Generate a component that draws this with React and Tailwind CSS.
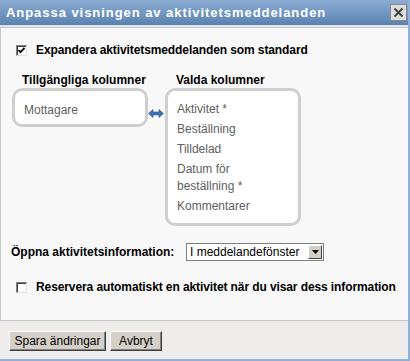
function Checkbox({ checked }) {
  return (
    <span className="flex h-[11px] w-[11px] shrink-0 items-center justify-center border border-t-[#808080] border-l-[#808080] border-b-[#e0e0e0] border-r-[#e0e0e0] bg-white shadow-[inset_1px_1px_0_#404040]">
      {checked && (
        <svg width="9" height="9" viewBox="0 0 9 9">
          <path d="M1.5 4 L3.5 6.2 L7.5 1.8" fill="none" stroke="#000" strokeWidth="1.8" />
        </svg>
      )}
    </span>
  );
}

function ListBox({ items, className }) {
  return (
    <div className={`rounded-[10px] border-[3px] border-[#cfcfcf] bg-white px-[9px] text-[12px] leading-[17px] text-[#606060] ${className}`}>
      {items.map((item) => (
        <div key={item} className="py-[1px] pb-[2px]">
          {item}
        </div>
      ))}
    </div>
  );
}

function SwapArrow() {
  return (
    <svg width="16" height="9" viewBox="0 0 16 9" className="mt-[36px] shrink-0">
      <path d="M0.5 4.5 L5 0.5 L5 3 L11 3 L11 0.5 L15.5 4.5 L11 8.5 L11 6 L5 6 L5 8.5 Z" fill="#3f72b5" stroke="#2a568f" strokeWidth="0.6" />
    </svg>
  );
}

function WinButton({ children, className }) {
  return (
    <button
      type="button"
      className={`h-[20px] whitespace-nowrap border border-t-white border-l-white border-b-[#404040] border-r-[#404040] bg-[#d4d0c8] px-0 text-[12px] leading-[16px] text-black shadow-[inset_-1px_-1px_0_#808080] ${className}`}
    >
      {children}
    </button>
  );
}

export default function App() {
  return (
    <div className="flex h-[361px] w-[410px] flex-col border-r-2 border-b-2 border-[#8fb1d8] bg-[#eeedeb] font-['Liberation_Sans',Arial,sans-serif]">
      <div className="flex h-[25px] shrink-0 items-center justify-between bg-gradient-to-b from-[#8cadd3] to-[#5a82b1] pl-[6px] pr-[1px]">
        <span className="text-[13px] font-bold tracking-[0.95px] text-white">Anpassa visningen av aktivitetsmeddelanden</span>
        <span className="flex h-[17px] w-[17px] items-center justify-center border border-[#8a8a8a] bg-[#dcdcdc]">
          <svg width="11" height="11" viewBox="0 0 11 11">
            <path d="M1.5 1.5 L9.5 9.5 M9.5 1.5 L1.5 9.5" stroke="#444" strokeWidth="2" />
          </svg>
        </span>
      </div>
      <div className="h-[2px] shrink-0 bg-[#e4e4e4]" />
      <div className="flex flex-1 flex-col border-t border-l border-b border-[#c4c8cc] bg-[#f8f8f8] pl-[15px]">
        <label className="mt-[13px] flex items-center gap-[9px] text-[12px] font-bold tracking-[-0.1px] text-black">
          <Checkbox checked />
          Expandera aktivitetsmeddelanden som standard
        </label>
        <div className="mt-[14px] flex items-start">
          <div className="flex flex-col">
            <span className="pl-[6px] text-[12px] leading-[14px] font-bold text-black">Tillgängliga kolumner</span>
            <ListBox items={['Mottagare']} className="mt-[1px] ml-[-4px] h-[39px] w-[136px] pt-[10px]" />
          </div>
          <SwapArrow />
          <div className="ml-[1px] flex flex-col">
            <span className="pl-[11px] text-[12px] leading-[14px] font-bold text-black">Valda kolumner</span>
            <ListBox
              items={['Aktivitet *', 'Beställning', 'Tilldelad', 'Datum för beställning *', 'Kommentarer']}
              className="mt-[1px] h-[138px] w-[136px] pt-[9px]"
            />
          </div>
        </div>
        <div className="mt-[17px] ml-[-5px] flex items-center">
          <span className="w-[175px] text-[12px] font-bold text-black">Öppna aktivitetsinformation:</span>
          <div className="flex h-[18px] w-[138px] items-center border border-[#7f7f7f] bg-white">
            <span className="flex-1 pl-[3px] text-[12px] leading-[16px] text-black">I meddelandefönster</span>
            <span className="mr-[1px] flex h-[14px] w-[14px] items-center justify-center border border-t-white border-l-white border-b-[#404040] border-r-[#404040] bg-[#d4d0c8]">
              <svg width="7" height="4" viewBox="0 0 7 4">
                <path d="M0 0 L7 0 L3.5 4 Z" fill="#000" />
              </svg>
            </span>
          </div>
        </div>
        <label className="mt-[17px] flex items-center gap-[9px] text-[12px] font-bold tracking-[-0.1px] text-black">
          <Checkbox />
          Reservera automatiskt en aktivitet när du visar dess information
        </label>
      </div>
      <div className="flex h-[38px] shrink-0 items-center gap-[4px] pl-[9px] pt-[1px]">
        <WinButton className="w-[97px]">Spara ändringar</WinButton>
        <WinButton className="w-[52px]">Avbryt</WinButton>
      </div>
    </div>
  );
}
